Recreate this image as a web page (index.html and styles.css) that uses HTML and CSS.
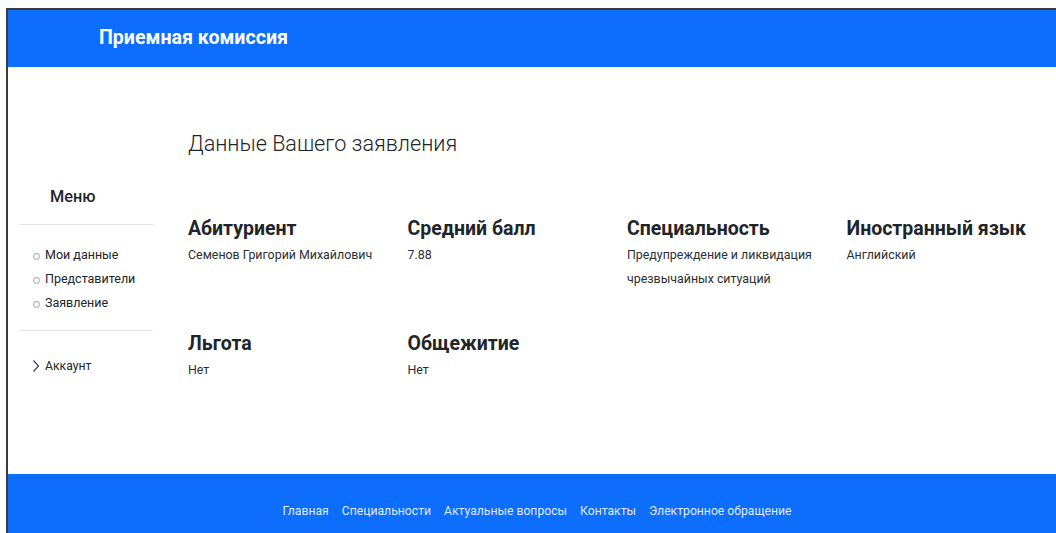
FILE: index.html
```html
<!DOCTYPE html>
<html lang="ru">
<head>
<meta charset="utf-8">
<title>Приемная комиссия — Заявление</title>
<link rel="stylesheet" href="styles.css">
</head>
<body>
<div class="frame">
  <header class="topbar">
    <a class="brand" href="#">Приемная комиссия</a>
  </header>

  <main class="layout">
    <aside class="sidebar">
      <h5 class="sidebar-title">Меню</h5>
      <hr class="divider">
      <ul class="side-list">
        <li><a href="#">Мои данные</a></li>
        <li><a href="#">Представители</a></li>
        <li><a href="#">Заявление</a></li>
      </ul>
      <hr class="divider">
      <a class="account" href="#">
        <svg class="chevron" viewBox="0 0 8 14" width="8" height="14" aria-hidden="true">
          <path d="M1.5 1.5 L6.5 7 L1.5 12.5" fill="none" stroke="#444" stroke-width="1.2"/>
        </svg>
        Аккаунт
      </a>
    </aside>

    <section class="content">
      <h3 class="page-title">Данные Вашего заявления</h3>
      <div class="fields">
        <div class="field">
          <h4>Абитуриент</h4>
          <p>Семенов Григорий Михайлович</p>
        </div>
        <div class="field">
          <h4>Средний балл</h4>
          <p>7.88</p>
        </div>
        <div class="field">
          <h4>Специальность</h4>
          <p>Предупреждение и ликвидация чрезвычайных ситуаций</p>
        </div>
        <div class="field">
          <h4>Иностранный язык</h4>
          <p>Английский</p>
        </div>
        <div class="field">
          <h4>Льгота</h4>
          <p>Нет</p>
        </div>
        <div class="field">
          <h4>Общежитие</h4>
          <p>Нет</p>
        </div>
      </div>
    </section>
  </main>

  <footer class="bottombar">
    <nav class="foot-nav">
      <a href="#">Главная</a>
      <a href="#">Специальности</a>
      <a href="#">Актуальные вопросы</a>
      <a href="#">Контакты</a>
      <a href="#">Электронное обращение</a>
    </nav>
  </footer>
</div>
</body>
</html>
```

FILE: styles.css
```css
* {
  box-sizing: border-box;
}

html, body {
  margin: 0;
  height: 100%;
  background: #fff;
  overflow: hidden;
}

body {
  font-family: Roboto, "Noto Sans", sans-serif;
  color: #212529;
  font-size: 12.5px;
}

a {
  color: inherit;
  text-decoration: none;
}

.frame {
  margin: 8px 0 0 6px;
  height: calc(100vh - 8px);
  border-top: 2px solid #3c3c3c;
  border-left: 2px solid #3c3c3c;
  display: flex;
  flex-direction: column;
}

/* top bar */
.topbar {
  height: 57px;
  flex: none;
  background: #0d6efd;
  display: flex;
  align-items: center;
  padding-left: 91px;
}

.brand {
  color: #fff;
  font-size: 19.6px;
  font-weight: 700;
  line-height: 24px;
  margin-top: -2px;
}

/* body area */
.layout {
  flex: 1;
  display: flex;
}

.sidebar {
  width: 157px;
  flex: none;
  padding: 119px 12px 0;
}

.sidebar-title {
  margin: 0 0 16px;
  padding-left: 30px;
  font-size: 16.3px;
  font-weight: 500;
  line-height: 22px;
}

.divider {
  margin: 0;
  border: 0;
  border-top: 1px solid #e3e4e8;
}

.side-list {
  list-style: none;
  margin: 18px 0 15px;
  padding: 0 0 0 25px;
}

.side-list li {
  position: relative;
  font-size: 12.5px;
  line-height: 24px;
}

.side-list li::before {
  content: "";
  position: absolute;
  left: -12px;
  top: 10px;
  width: 5px;
  height: 5px;
  border: 1px solid #9a9fa5;
  border-radius: 50%;
}

.account {
  display: flex;
  align-items: center;
  gap: 5px;
  margin-top: 23px;
  padding-left: 12px;
  font-size: 12.2px;
  line-height: 24px;
}

.chevron {
  display: block;
}

.content {
  flex: 1;
  padding: 63px 2px 0 11px;
}

.page-title {
  margin: 0 0 59px;
  padding-left: 12px;
  font-size: 21.6px;
  font-weight: 300;
  line-height: 28px;
}

.fields {
  display: grid;
  grid-template-columns: repeat(4, 1fr);
  row-gap: 41px;
}

.field {
  padding: 0 12px;
}

.field h4 {
  margin: 0;
  font-size: 19.5px;
  font-weight: 700;
  line-height: 24px;
  white-space: nowrap;
}

.field p {
  margin: 2px 0 0;
  font-size: 12.4px;
  line-height: 24px;
  color: #2b2f33;
}

/* bottom bar */
.bottombar {
  height: 59px;
  flex: none;
  background: #0d6efd;
  padding-top: 25px;
}

.foot-nav {
  display: flex;
  justify-content: center;
  gap: 13px;
  padding-left: 10px;
}

.foot-nav a {
  color: rgba(255, 255, 255, 0.88);
  font-size: 12.2px;
  line-height: 24px;
}
```
